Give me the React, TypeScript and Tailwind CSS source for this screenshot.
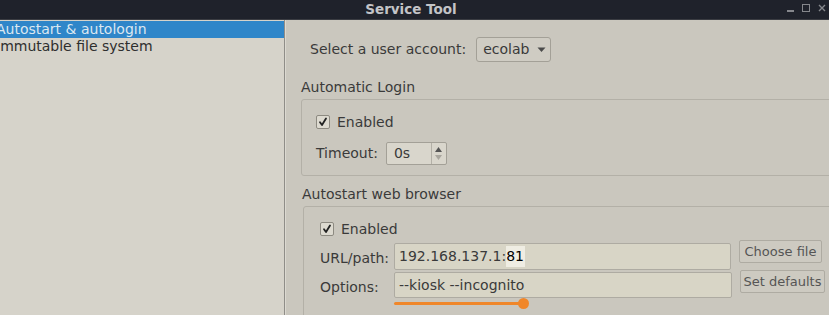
import React from "react";

const font = { fontFamily: '"DejaVu Sans", "Liberation Sans", sans-serif' };

function Check() {
  return (
    <div className="w-[14px] h-[14px] border border-[#8d8a81] bg-[#dddad0] rounded-[2px] flex items-center justify-center">
      <svg width="10" height="10" viewBox="0 0 10 10">
        <path d="M2 5.2 L4 8 L8 1.5" fill="none" stroke="#222" strokeWidth="1.8" strokeLinecap="round" strokeLinejoin="round" />
      </svg>
    </div>
  );
}

export default function App() {
  return (
    <div className="w-[829px] h-[315px] overflow-hidden flex flex-col bg-[#cac7be] text-[14px] text-[#3a3a3a]" style={font}>
      {/* title bar */}
      <div className="h-[20px] shrink-0 bg-[#1f222b] relative flex items-center justify-center border-b border-[#3a3c42]">
        <span className="font-bold text-[13.5px] text-[#c3c4c7] leading-none ml-[-7px]">Service Tool</span>
        <div className="absolute right-[3px] top-[3px] flex items-center gap-[8px]">
          <div className="w-[7px] h-[2px] bg-[#85878c] mt-[7px]" />
          <div className="w-[8px] h-[8px] border border-[#85878c]" />
          <svg width="8" height="8" viewBox="0 0 8 8">
            <path d="M1 1 L7 7 M7 1 L1 7" stroke="#85878c" strokeWidth="1.4" />
          </svg>
        </div>
      </div>

      <div className="flex flex-1 min-h-0">
        {/* left list */}
        <div className="w-[285px] shrink-0 bg-[#d6d3ca] border-r border-[#8f8d88] overflow-hidden pt-[1px]">
          <div className="h-[17px] bg-[#2f86c9] text-[#dce8f1] leading-[17px] whitespace-nowrap">
            <span className="ml-[-4px]">Autostart &amp; autologin</span>
          </div>
          <div className="h-[17px] leading-[17px] whitespace-nowrap text-[#2e2e2e]">
            <span className="ml-[-4px]">Immutable file system</span>
          </div>
        </div>

        {/* right pane */}
        <div className="flex-1 min-w-0 overflow-hidden pl-[15px] pt-[17px] relative border-l border-[#dcd9d1]">
          {/* account row */}
          <div className="flex items-center h-[25px] ml-[9px]">
            <span>Select a user account:</span>
            <div className="ml-[10px] h-[25px] w-[75px] border border-[#a3a097] rounded-[3px] bg-[#cfccc3] flex items-center pl-[6px]">
              <span>ecolab</span>
              <svg className="ml-[8px]" width="9" height="6" viewBox="0 0 9 6">
                <path d="M0.5 0.5 L8.5 0.5 L4.5 5 Z" fill="#4a4a4a" />
              </svg>
            </div>
          </div>

          {/* Automatic Login */}
          <div className="mt-[16px] h-[18px] leading-[18px]">Automatic Login</div>
          <div className="mt-[3px] w-[560px] h-[77px] border border-[#b3b0a7] rounded-[3px] pl-[14px] pt-[13px] flex flex-col">
            <div className="flex items-center h-[18px] gap-[7px]">
              <Check />
              <span>Enabled</span>
            </div>
            <div className="flex items-center mt-[11px] h-[23px]">
              <span>Timeout:</span>
              <div className="ml-[8px] w-[61px] h-[23px] border border-[#a3a097] rounded-[2px] bg-[#d9d6cc] flex">
                <span className="flex-1 pl-[7px] leading-[21px]">0s</span>
                <div className="w-[15px] border-l border-[#b3b0a7] flex flex-col items-center justify-center gap-[3px]">
                  <svg width="7" height="5" viewBox="0 0 7 5">
                    <path d="M0 5 L3.5 0 L7 5 Z" fill="#555" />
                  </svg>
                  <svg width="7" height="5" viewBox="0 0 7 5">
                    <path d="M0 0 L3.5 5 L7 0 Z" fill="#a8a59d" />
                  </svg>
                </div>
              </div>
            </div>
          </div>

          {/* Autostart web browser */}
          <div className="mt-[9px] h-[18px] leading-[18px] ml-[1px]">Autostart web browser</div>
          <div className="mt-[3px] ml-[2px] w-[560px] h-[120px] border border-[#b3b0a7] rounded-[3px] pl-[16px] pt-[13px] flex flex-col">
            <div className="flex items-center h-[18px] gap-[7px]">
              <Check />
              <span>Enabled</span>
            </div>
            <div className="flex items-start mt-[5px]">
              <span className="w-[74px] pt-[5px]">URL/path:</span>
              <div className="w-[337px] h-[27px] border border-[#aeaba2] rounded-[2px] bg-[#d8d5c6] flex items-center pl-[4px]">
                <span>192.168.137.1:</span>
                <span className="text-black bg-[#efede3] pr-[1px]">81</span>
              </div>
              <div className="ml-[8px] mt-[-3px] w-[83px] h-[23px] border border-[#aeaba2] rounded-[2px] bg-[#cdcac1] flex items-center justify-center text-[13px] text-[#555]">
                Choose file
              </div>
            </div>
            <div className="flex items-start mt-[2px]">
              <span className="w-[74px] pt-[5px]">Options:</span>
              <div className="w-[338px] h-[26px] border border-[#aeaba2] rounded-[2px] bg-[#d8d5c6] flex items-center pl-[4px]">
                <span>--kiosk --incognito</span>
              </div>
              <div className="ml-[8px] mt-[-2px] w-[85px] h-[23px] border border-[#aeaba2] rounded-[2px] bg-[#cdcac1] flex items-center justify-center text-[13px] text-[#555]">
                Set defaults
              </div>
            </div>
          </div>

          {/* orange annotation */}
          <div className="absolute left-[108px] top-[278px] flex items-center">
            <div className="w-[128px] h-[3px] bg-[#f0872a] rounded-full" />
            <div className="w-[11px] h-[11px] rounded-full bg-[#f0872a] ml-[-4px]" />
          </div>
        </div>
      </div>
    </div>
  );
}
